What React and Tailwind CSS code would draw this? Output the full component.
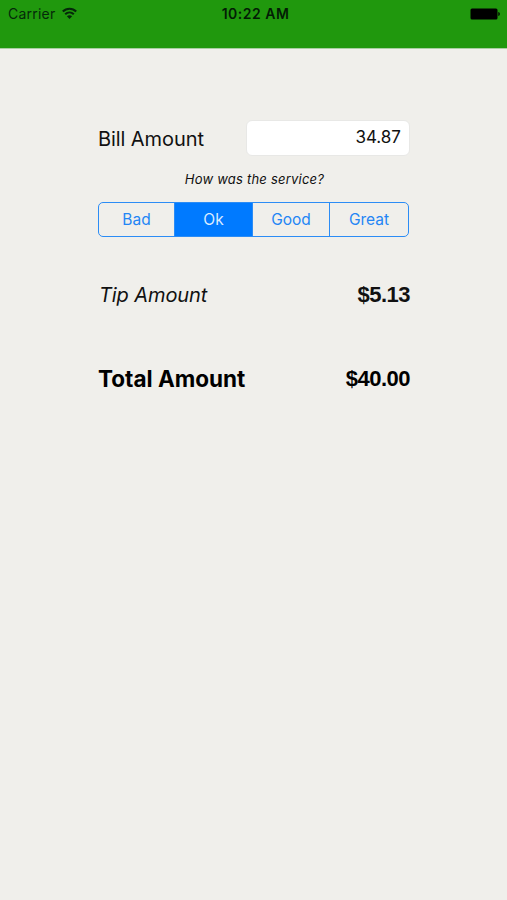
import { useState } from "react";

const ratings = [
  { label: "Bad", width: "w-[76px]" },
  { label: "Ok", width: "w-[78px]" },
  { label: "Good", width: "w-[77px]" },
  { label: "Great", width: "w-[78px]" },
];

function StatusBar() {
  return (
    <header className="h-[49px] border-b border-[#a9cfa2] bg-[#20980d] text-[#05280a]">
      <div className="grid h-7 grid-cols-3 items-center pl-2 pr-[7px]">
        <div className="flex items-center gap-[7px]">
          <span className="text-[14px] leading-none tracking-[0.22px]">Carrier</span>
          <svg className="-mt-[3px]" width="15" height="12" viewBox="0 0 15 12" fill="none" stroke="currentColor" strokeWidth="2.1">
            <path d="M.8 4.600C4.500.800 10.500.800 14.200 4.600" />
            <path d="M3.200 7.300c2.500-2.400 6.100-2.400 8.600 0" />
            <path d="M7.500 12 4.900 9.300c1.500-1.400 3.700-1.400 5.200 0Z" fill="currentColor" stroke="none" />
          </svg>
        </div>
        <span className="pl-[3px] text-center text-[14px] leading-none font-semibold tracking-[0.5px] text-[#031c05]">10:22 AM</span>
        <svg className="-mt-px justify-self-end" width="30" height="12" viewBox="0 0 30 12" fill="#000">
          <rect x="0.5" y="0.5" width="27" height="11" rx="1.5" />
          <path d="M28.3 4c2 .5 2 3.500 0 4Z" />
        </svg>
      </div>
    </header>
  );
}

export default function App() {
  const [bill, setBill] = useState("34.87");
  const [selected, setSelected] = useState("Ok");

  return (
    <div className="h-[900px] w-[507px] overflow-hidden bg-[#f0efeb] font-['Inter',sans-serif] text-[#111]">
      <StatusBar />
      <main className="ml-[98px] w-[312px] pt-[71px]">
        <div className="flex h-9 items-center justify-between">
          <label htmlFor="bill" className="pt-px text-[20px] leading-none tracking-[-0.08px] whitespace-nowrap">Bill Amount</label>
          <input
            id="bill"
            value={bill}
            onChange={(e) => setBill(e.target.value)}
            className="h-9 w-[164px] rounded-[6px] border border-[#e8e8e6] bg-white pr-2 pb-0.5 text-right text-[17px] outline-none"
          />
        </div>
        <p className="mt-3 h-[22px] pl-px text-center text-[13px] leading-[22px] tracking-[0.22px] italic">How was the service?</p>
        <div className="mt-3 flex h-[35px] w-[311px] overflow-hidden rounded-[5px] border border-[#2b8cf5]">
          {ratings.map(({ label, width }) => (
            <button
              key={label}
              onClick={() => setSelected(label)}
              className={`${width} border-r border-[#2b8cf5] text-[15.5px] last:border-r-0 ${
                selected === label ? "bg-[#007aff] text-[#d9ebff]" : "text-[#2385f5]"
              }`}
            >
              {label}
            </button>
          ))}
        </div>
        <div className="mt-[43px] flex h-[30px] items-center justify-between">
          <span className="pl-px text-[20px] tracking-[-0.1px] italic">Tip Amount</span>
          <span className="pb-px font-['Liberation_Sans',sans-serif] text-[22px] font-bold tracking-[-0.5px]">$5.13</span>
        </div>
        <div className="mt-[54px] flex h-[30px] items-center justify-between text-black">
          <span className="text-[22.5px] font-bold">Total Amount</span>
          <span className="pb-px font-['Liberation_Sans',sans-serif] text-[22px] font-bold tracking-[-0.5px]">$40.00</span>
        </div>
      </main>
    </div>
  );
}
